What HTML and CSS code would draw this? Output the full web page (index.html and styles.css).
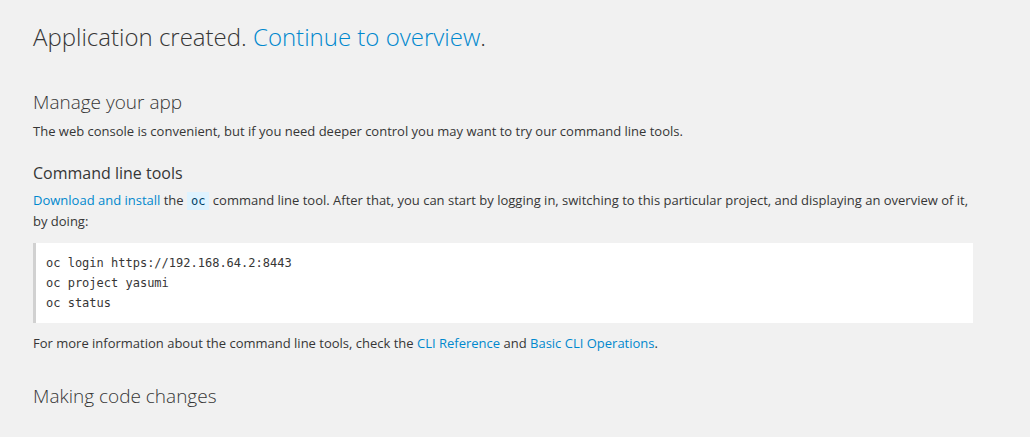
FILE: index.html
```html
<!DOCTYPE html>
<html lang="en">
<head>
<meta charset="utf-8">
<title>Application created</title>
<link rel="stylesheet" href="styles.css">
</head>
<body>
<main class="page">
  <h1 class="title">Application created. <a class="link" href="#">Continue to overview</a>.</h1>

  <section class="section">
    <h2 class="section-title">Manage your app</h2>
    <p class="text">The web console is convenient, but if you need deeper control you may want to try our command line tools.</p>

    <h3 class="sub-title">Command line tools</h3>
    <p class="text"><a class="link" href="#">Download and install</a> the <code class="inline-code">oc</code> command line tool. After that, you can start by logging in, switching to this particular project, and displaying an overview of it, by doing:</p>
    <pre class="code-block">oc login https://192.168.64.2:8443
oc project yasumi
oc status</pre>
    <p class="text">For more information about the command line tools, check the <a class="link" href="#">CLI Reference</a> and <a class="link" href="#">Basic CLI Operations</a>.</p>
  </section>

  <section class="section">
    <h2 class="section-title">Making code changes</h2>
  </section>
</main>
</body>
</html>
```

FILE: styles.css
```css
html, body {
  margin: 0;
  padding: 0;
  background: #f1f1f1;
}

body {
  font-family: "Open Sans", "Liberation Sans", sans-serif;
  font-size: 13px;
  line-height: 21px;
  color: #363636;
}

.page {
  width: 940px;
  padding: 20px 33px 0 33px;
}

.link {
  color: #0088ce;
  text-decoration: none;
}

.title {
  margin: 0 0 35px 0;
  font-size: 24px;
  font-weight: 300;
  line-height: 34px;
}

.section + .section {
  margin-top: 29px;
}

.section-title {
  margin: 0 0 6px 0;
  font-size: 19px;
  font-weight: 300;
  line-height: 26px;
}

.sub-title {
  margin: 20px 0 6px 0;
  font-size: 16px;
  font-weight: 400;
  line-height: 22px;
}

.text {
  margin: 0 0 10px 0;
}

.inline-code {
  display: inline-block;
  font-family: "DejaVu Sans Mono", "Liberation Mono", monospace;
  font-size: 12px;
  line-height: 18px;
  background: #def3ff;
  color: #004368;
  padding: 0 4px;
}

.code-block {
  margin: 11px 0 10px 0;
  padding: 10px;
  background: #ffffff;
  border-left: 3px solid #d1d1d1;
  font-family: "DejaVu Sans Mono", "Liberation Mono", monospace;
  font-size: 12px;
  line-height: 20px;
  color: #363636;
}
```
